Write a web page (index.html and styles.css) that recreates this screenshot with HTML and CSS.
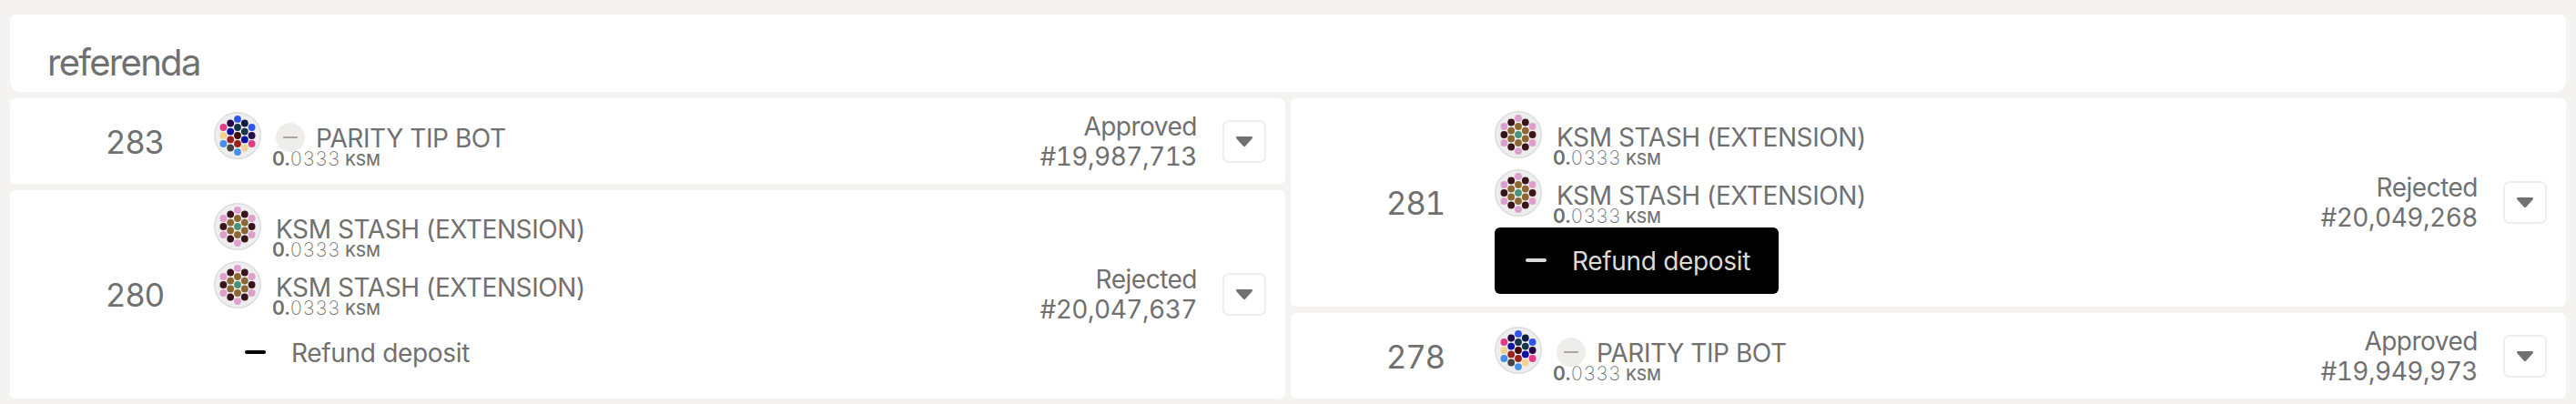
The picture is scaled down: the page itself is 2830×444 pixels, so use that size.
FILE: index.html
```html
<!DOCTYPE html>
<html lang="en">
<head>
<meta charset="utf-8">
<title>referenda</title>
<link rel="stylesheet" href="styles.css">
</head>
<body>
<svg width="0" height="0" class="defs">
  <symbol id="bot" viewBox="0 0 64 64">
    <circle cx="32" cy="32" r="31.1" fill="#eee" stroke="#ddd" stroke-width="1.8"/>
    <g transform="translate(32 32)">
      <circle cy="-22.2" r="4.8" fill="#2f56ea"/><circle cy="-11.1" r="4.8" fill="#16344a"/><circle r="4.8" fill="#440d0d"/><circle cy="11.1" r="4.8" fill="#9b221c"/><circle cy="22.2" r="4.8" fill="#468fea"/>
      <circle cx="-9.6" cy="-16.6" r="4.8" fill="#260747"/><circle cx="-9.6" cy="-5.5" r="4.8" fill="#0f12a3"/><circle cx="-9.6" cy="5.5" r="4.8" fill="#9b221c"/><circle cx="-9.6" cy="16.6" r="4.8" fill="#444"/>
      <circle cx="9.6" cy="-16.6" r="4.8" fill="#0b1e47"/><circle cx="9.6" cy="-5.5" r="4.8" fill="#16344a"/><circle cx="9.6" cy="5.5" r="4.8" fill="#0f12a3"/><circle cx="9.6" cy="16.6" r="4.8" fill="#f2d293"/>
      <circle cx="-19.2" cy="-11.1" r="4.8" fill="#e23b87"/><circle cx="-19.2" r="4.8" fill="#f2d293"/><circle cx="-19.2" cy="11.1" r="4.8" fill="#468fea"/>
      <circle cx="19.2" cy="-11.1" r="4.8" fill="#2f56ea"/><circle cx="19.2" r="4.8" fill="#260747"/><circle cx="19.2" cy="11.1" r="4.8" fill="#e23b87"/>
    </g>
  </symbol>
  <symbol id="stash" viewBox="0 0 64 64">
    <circle cx="32" cy="32" r="31.1" fill="#eee" stroke="#ddd" stroke-width="1.8"/>
    <g transform="translate(32 32)">
      <g fill="#de9fce"><circle cy="-22.2" r="4.8"/><circle cy="22.2" r="4.8"/><circle cx="-19.2" cy="-11.1" r="4.8"/><circle cx="-19.2" cy="11.1" r="4.8"/><circle cx="19.2" cy="-11.1" r="4.8"/><circle cx="19.2" cy="11.1" r="4.8"/></g>
      <g fill="#3a131b"><circle cx="-9.6" cy="-16.6" r="4.8"/><circle cx="9.6" cy="-16.6" r="4.8"/><circle cx="-9.6" cy="16.6" r="4.8"/><circle cx="9.6" cy="16.6" r="4.8"/><circle cx="-19.2" r="4.8"/><circle cx="19.2" r="4.8"/></g>
      <g fill="#8c6732"><circle cy="-11.1" r="4.8"/><circle cy="11.1" r="4.8"/><circle cx="-9.6" cy="-5.5" r="4.8"/><circle cx="-9.6" cy="5.5" r="4.8"/><circle cx="9.6" cy="-5.5" r="4.8"/><circle cx="9.6" cy="5.5" r="4.8"/></g>
      <circle r="4.8" fill="#4b9277"/>
    </g>
  </symbol>
  <symbol id="caret" viewBox="0 0 18 11">
    <path d="M1.3 0h15.4c1.2 0 1.7 1.4.9 2.2L10.2 10.4c-.7.7-1.7.7-2.4 0L.4 2.2C-.4 1.4.1 0 1.3 0z" fill="#707070"/>
  </symbol>
</svg>

<header class="heading"><h1>referenda</h1></header>

<main class="columns">
  <section class="column">
    <article class="card small">
      <div class="number">283</div>
      <div class="body">
        <div class="account">
          <svg class="avatar"><use href="#bot"/></svg>
          <div class="details">
            <div class="name"><span class="badge"></span>PARITY TIP BOT</div>
            <div class="amount"><b>0.</b><i>0333</i><small>KSM</small></div>
          </div>
        </div>
      </div>
      <div class="status"><span>Approved</span><span>#19,987,713</span></div>
      <button class="toggle"><svg width="18" height="11"><use href="#caret"/></svg></button>
    </article>
    <article class="card large">
      <div class="number">280</div>
      <div class="body">
        <div class="account">
          <svg class="avatar"><use href="#stash"/></svg>
          <div class="details">
            <div class="name">KSM STASH (EXTENSION)</div>
            <div class="amount"><b>0.</b><i>0333</i><small>KSM</small></div>
          </div>
        </div>
        <div class="account">
          <svg class="avatar"><use href="#stash"/></svg>
          <div class="details">
            <div class="name">KSM STASH (EXTENSION)</div>
            <div class="amount"><b>0.</b><i>0333</i><small>KSM</small></div>
          </div>
        </div>
        <button class="refund"><span class="dash"></span>Refund deposit</button>
      </div>
      <div class="status"><span>Rejected</span><span>#20,047,637</span></div>
      <button class="toggle"><svg width="18" height="11"><use href="#caret"/></svg></button>
    </article>
  </section>

  <section class="column">
    <article class="card large">
      <div class="number">281</div>
      <div class="body">
        <div class="account">
          <svg class="avatar"><use href="#stash"/></svg>
          <div class="details">
            <div class="name">KSM STASH (EXTENSION)</div>
            <div class="amount"><b>0.</b><i>0333</i><small>KSM</small></div>
          </div>
        </div>
        <div class="account">
          <svg class="avatar"><use href="#stash"/></svg>
          <div class="details">
            <div class="name">KSM STASH (EXTENSION)</div>
            <div class="amount"><b>0.</b><i>0333</i><small>KSM</small></div>
          </div>
        </div>
        <button class="refund active"><span class="dash"></span>Refund deposit</button>
      </div>
      <div class="status"><span>Rejected</span><span>#20,049,268</span></div>
      <button class="toggle"><svg width="18" height="11"><use href="#caret"/></svg></button>
    </article>
    <article class="card small">
      <div class="number">278</div>
      <div class="body">
        <div class="account">
          <svg class="avatar"><use href="#bot"/></svg>
          <div class="details">
            <div class="name"><span class="badge"></span>PARITY TIP BOT</div>
            <div class="amount"><b>0.</b><i>0333</i><small>KSM</small></div>
          </div>
        </div>
      </div>
      <div class="status"><span>Approved</span><span>#19,949,973</span></div>
      <button class="toggle"><svg width="18" height="11"><use href="#caret"/></svg></button>
    </article>
  </section>
</main>
</body>
</html>
```
FILE: styles.css
```css
* { box-sizing: border-box; }
body {
  margin: 0;
  padding: 16px 11px 6px;
  height: 444px;
  overflow: hidden;
  background: #f4f3f1;
  color: #707070;
  font: 28px/33px Inter, "Liberation Sans", sans-serif;
}
.defs { position: absolute; }
.heading {
  height: 85px;
  padding: 30px 0 0 41px;
  border-radius: 6px 6px 12px 12px;
  background: #fff;
}
h1 {
  margin: 0;
  font-size: 40px;
  line-height: 45px;
  font-weight: 400;
  letter-spacing: -1.7px;
}
.columns {
  display: grid;
  grid-template-columns: 1401px 1401px;
  gap: 6px;
  margin-top: 7px;
}
.column { display: flex; flex-direction: column; gap: 7px; }
.card {
  display: flex;
  align-items: center;
  padding-right: 21px;
  border-radius: 6px;
  background: #fff;
}
.small { height: 94px; }
.large { height: 229px; }
.number {
  width: 169px;
  margin-right: 55px;
  padding-top: 2px;
  text-align: right;
  font-size: 35px;
  line-height: 34px;
  font-feature-settings: "tnum";
  letter-spacing: -1.3px;
}
.large .number { padding-top: 1px; }
.body { flex: 1; align-self: flex-start; padding-top: 14px; }
.small .body { padding-top: 15px; }
.account { display: flex; height: 64px; }
.avatar { width: 52px; height: 52px; }
.details { padding: 16px 0 0 12px; }
.name {
  display: flex;
  align-items: center;
  height: 26px;
  padding-left: 4px;
  line-height: 26px;
  letter-spacing: -0.42px;
  white-space: nowrap;
}
.badge {
  display: flex;
  align-items: center;
  justify-content: center;
  width: 32px;
  height: 32px;
  margin: -4px 12px -2px 0;
  border-radius: 50%;
  background: #eeedec;
}
.badge::before { content: ""; width: 16px; height: 2px; border-radius: 1px; background: #a5a5a4; }
.amount {
  display: flex;
  align-items: baseline;
  margin-top: 1px;
  font-size: 21px;
  line-height: 18px;
  white-space: nowrap;
}
.amount b { font-weight: 600; }
.amount i { font-style: normal; font-weight: 200; letter-spacing: 1.3px; }
.amount small { margin-left: 5px; font-size: 17px; font-weight: 450; letter-spacing: 0.2px; }
.refund {
  display: flex;
  align-items: center;
  width: 312px;
  height: 73px;
  padding: 1px 0 0 34px;
  border: 0;
  border-radius: 6px;
  background: none;
  color: inherit;
  font: inherit;
  line-height: 34px;
  letter-spacing: -0.32px;
  white-space: nowrap;
}
.dash { width: 23px; height: 4px; margin: 0 28px 2px 0; border-radius: 2px; background: #000; }
.active { background: #000; color: #dbdad9; }
.active .dash { background: #dbdad9; }
.status {
  display: flex;
  flex-direction: column;
  align-items: flex-end;
  padding-top: 1px;
  letter-spacing: -0.5px;
  font-feature-settings: "tnum";
}
.toggle {
  display: flex;
  align-items: center;
  justify-content: center;
  width: 48px;
  height: 47px;
  margin-left: 28px;
  padding: 0;
  border: 2px solid #eee;
  border-radius: 7px;
  background: #fff;
}
```
